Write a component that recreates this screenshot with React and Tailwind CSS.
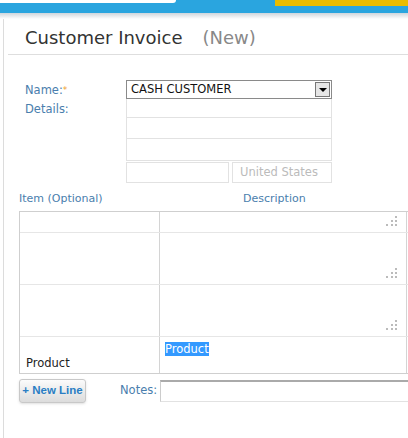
import React from "react";

const Grip = () => (
  <div className="grid grid-cols-3 gap-[2px] w-[12px]">
    <span />
    <span />
    <span className="w-[2px] h-[2px] bg-[#bbb]" />
    <span />
    <span className="w-[2px] h-[2px] bg-[#bbb]" />
    <span className="w-[2px] h-[2px] bg-[#bbb]" />
    <span className="w-[2px] h-[2px] bg-[#bbb]" />
    <span className="w-[2px] h-[2px] bg-[#bbb]" />
    <span className="w-[2px] h-[2px] bg-[#bbb]" />
  </div>
);

function Row({ h, item, desc, grip = true }) {
  return (
    <div className={`flex ${h} border-b border-[#e6e6e6] last:border-b-0`}>
      <div className="w-[140px] shrink-0 border-r border-[#d4d4d4] flex items-end px-[6px] pb-[1px] text-[#222]">
        {item}
      </div>
      <div className="w-[246px] shrink-0 relative px-[5px] pt-[4px]">
        {desc}
        {grip && (
          <div className="absolute right-[8px] bottom-[6px]">
            <Grip />
          </div>
        )}
      </div>
      <div className="w-[20px] shrink-0 border-l border-[#d4d4d4]" />
    </div>
  );
}

export default function App() {
  return (
    <div className="w-[408px] h-[438px] overflow-hidden bg-white font-['DejaVu_Sans',sans-serif] text-[11.5px]">
      <div className="h-[13px] bg-[#2aa5df] flex justify-between items-start">
        <div className="w-[176px] h-[3px] bg-white rounded-br-[3px]" />
        <div className="w-[133px] h-[6px] bg-[#e9bc00]" />
      </div>
      <div className="h-[6px] bg-gradient-to-b from-[#cfd6dc] to-white" />

      <div className="ml-[3px] border-l border-[#dcdcdc] h-[419px]">
        <div className="ml-[4px] border-b border-[#dedede] pl-[17px] pt-[8px] pb-[5px] flex items-baseline text-[18px] leading-[22px]">
          <span className="text-[#333]">Customer Invoice</span>
          <span className="ml-[20px] text-[#888]">(New)</span>
        </div>

        <div className="pl-[21px] pt-[25px] flex">
          <div className="w-[101px] shrink-0 text-[#4a7ead] leading-[19px] pt-[1px]">
            <div>
              Name:<span className="text-[#f0a030] align-top text-[9px]">*</span>
            </div>
            <div>Details:</div>
          </div>
          <div className="w-[206px]">
            <div className="h-[19px] border border-[#8a8a8a] flex items-center justify-between pl-[4px] pr-[1px] text-[#111]">
              <span>CASH CUSTOMER</span>
              <div className="w-[15px] h-[15px] border border-[#777] bg-[#e6e6e6] flex items-center justify-center">
                <div className="w-0 h-0 border-l-[4px] border-r-[4px] border-t-[4px] border-l-transparent border-r-transparent border-t-black" />
              </div>
            </div>
            <div className="h-[19px] border-x border-b border-[#e2e2e2]" />
            <div className="h-[21px] border-x border-b border-[#e2e2e2]" />
            <div className="h-[22px] border-x border-b border-[#e2e2e2]" />
            <div className="flex gap-[3px] mt-[1px]">
              <div className="w-[103px] h-[21px] border border-[#e2e2e2]" />
              <div className="flex-1 h-[21px] border border-[#e2e2e2] flex items-center pl-[7px] text-[#bbb]">
                United States
              </div>
            </div>
          </div>
        </div>

        <div className="flex pl-[15px] pt-[8px] pb-[5px] text-[#4a7ead] text-[11px] leading-[15px]">
          <span className="w-[224px]">Item (Optional)</span>
          <span>Description</span>
        </div>

        <div className="ml-[15px] w-[420px] border border-[#cfcfcf]">
          <Row h="h-[21px]" />
          <Row h="h-[52px]" />
          <Row h="h-[52px]" />
          <Row
            h="h-[36px]"
            item="Product"
            grip={false}
            desc={<span className="bg-[#3399ff] text-white">Product</span>}
          />
        </div>

        <div className="flex items-center mt-[5px] pl-[15px]">
          <button className="w-[67px] h-[24px] whitespace-nowrap rounded-[3px] border border-[#c8c8c8] bg-gradient-to-b from-[#fbfbfb] to-[#dcdcdc] text-[#2a7ec4] font-['Liberation_Sans',sans-serif] font-bold text-[11.5px] shadow-sm">
            + New Line
          </button>
          <span className="ml-[34px] text-[#4a7ead]">Notes:</span>
          <div className="ml-[3px] flex-1 h-[22px] border-t-2 border-[#aaa] border-b border-b-[#e2e2e2] border-l border-l-[#ccc]" />
        </div>
      </div>
    </div>
  );
}
